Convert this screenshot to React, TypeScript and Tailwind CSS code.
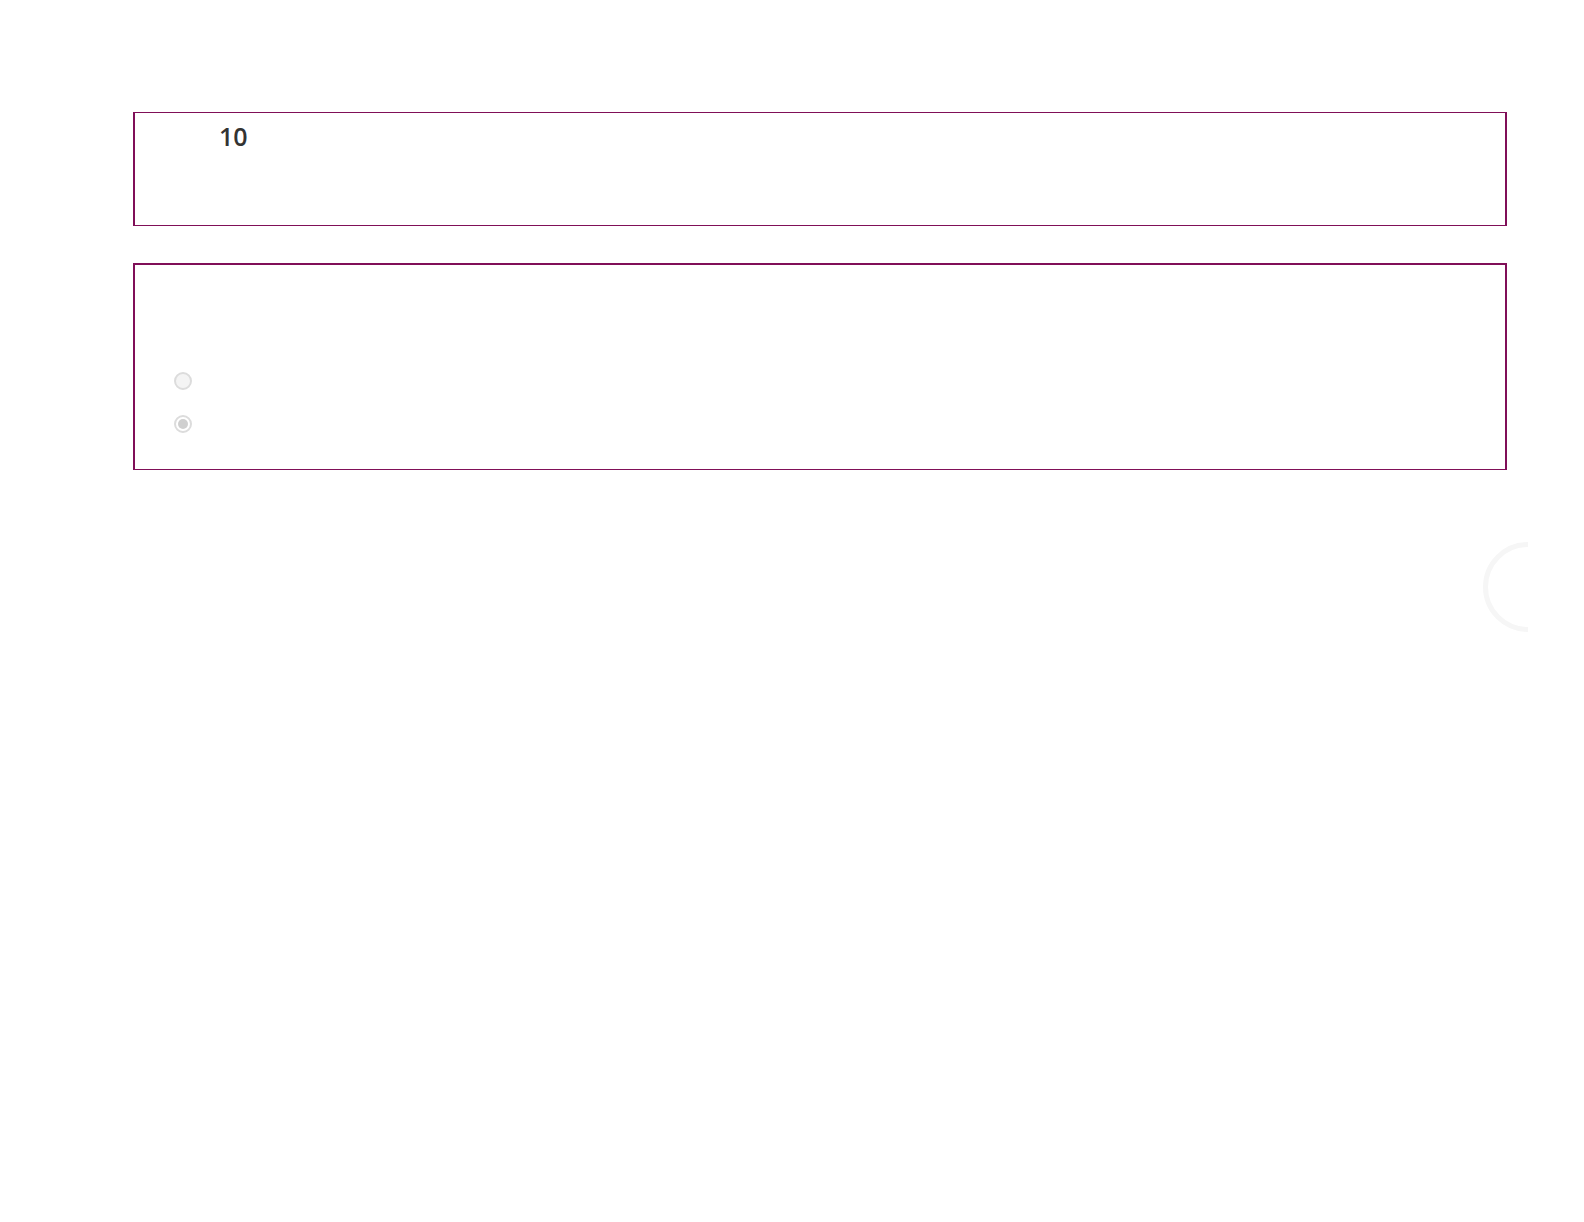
export default function App() {
  const frame = 'border-[#800f58] bg-white';
  return (
    <div
      className="relative min-h-[1222px] w-full bg-white pt-[112px] pl-[133px] pr-[77px]"
      style={{ fontFamily: '"Open Sans", "Liberation Sans", sans-serif' }}
    >
      {/* value field */}
      <div className={`h-[114px] border-x-2 border-y ${frame}`}>
        <div className="pl-[84px] pt-[8px] text-[25px] font-semibold leading-[30px] text-[#333333]">10</div>
      </div>

      {/* choice field */}
      <div className={`mt-[37px] h-[207px] border-2 border-b ${frame}`}>
        <div className="flex flex-col gap-[25px] pl-[39px] pt-[107px]">
          <span className="block h-[18px] w-[18px] rounded-full border-2 border-[#dcdcdc] bg-[#f4f4f4]" />
          <span className="flex h-[18px] w-[18px] items-center justify-center rounded-full border-2 border-[#dcdcdc] bg-white">
            <span className="block h-[10px] w-[10px] rounded-full bg-[#cfcfcf]" />
          </span>
        </div>
      </div>

      {/* loading spinner, half hidden */}
      <svg className="absolute left-[1482px] top-[540px]" width="50" height="94" viewBox="0 0 50 94">
        <path d="M46 4.5 A42.5 42.5 0 0 0 46 89.5" fill="none" stroke="#f6f6f6" strokeWidth="5" />
      </svg>
    </div>
  );
}
